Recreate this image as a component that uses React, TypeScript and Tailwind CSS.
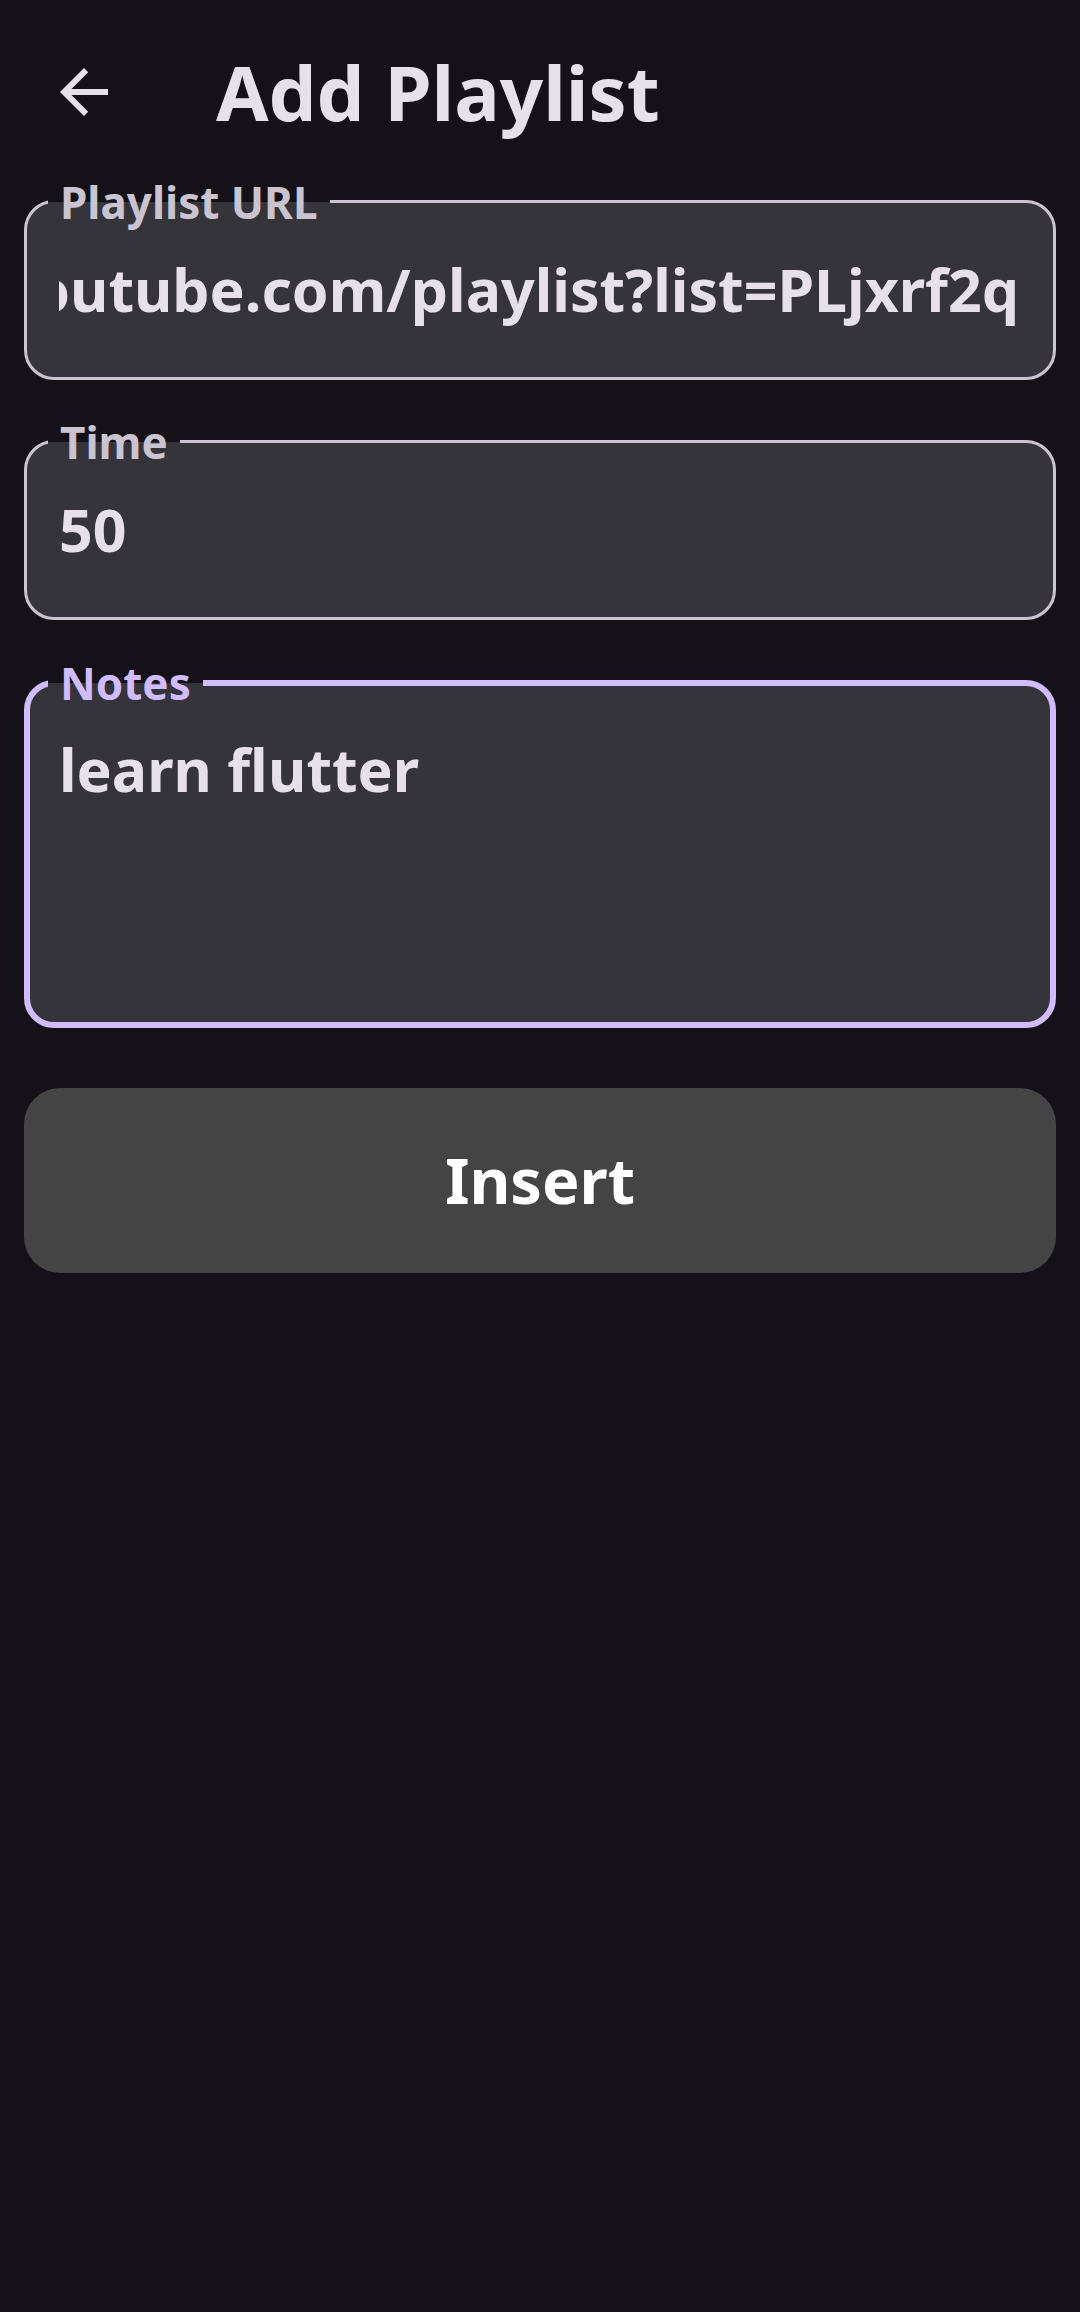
import clsx from "clsx";

interface FieldProps {
  label: string;
  value: string;
  focused?: boolean;
  alignEnd?: boolean;
}

function BackArrow() {
  return (
    <svg viewBox="0 0 24 24" className="h-[72px] w-[72px] fill-[#E6E0E9]" aria-hidden>
      <path d="M20 11H7.83l5.59-5.59L12 4l-8 8 8 8 1.41-1.41L7.83 13H20v-2z" />
    </svg>
  );
}

function Field({ label, value, focused = false, alignEnd = false }: FieldProps) {
  return (
    <div
      className={clsx(
        "relative rounded-[30px] bg-[#36343B]",
        focused
          ? "h-[348px] border-[6px] border-[#D0BCFF] pt-[43px] pl-[29px] pr-[31px]"
          : "h-[180px] border-[3px] border-[#CAC4D0] pt-[46px] pl-[32px] pr-[34px]",
      )}
    >
      <span
        className={clsx(
          "absolute bg-[linear-gradient(to_bottom,#141218_50%,#36343B_50%)] px-3 text-[44px] leading-[44px] font-bold whitespace-nowrap",
          focused ? "top-[-25px] left-[18px] text-[#D0BCFF]" : "top-[-23.5px] left-[21px] text-[#CAC4D0]",
        )}
      >
        {label}
      </span>
      <div
        className={clsx(
          "flex overflow-hidden text-[59px] leading-[80px] font-bold whitespace-nowrap text-[#E6E0E9]",
          alignEnd && "justify-end",
        )}
      >
        <span className="shrink-0">{value}</span>
      </div>
    </div>
  );
}

export default function App() {
  return (
    <div className="min-h-screen bg-[#141218] font-['Noto_Sans',sans-serif]">
      <header className="flex h-[184px] items-center">
        <button type="button" className="flex w-[168px] justify-center">
          <BackArrow />
        </button>
        <h1 className="pl-[48px] text-[76px] leading-[78px] font-bold text-[#E6E0E9]">Add Playlist</h1>
      </header>

      <main className="flex flex-col gap-[60px] px-6 pt-4">
        <Field label="Playlist URL" value="https://www.youtube.com/playlist?list=PLjxrf2q" alignEnd />
        <Field label="Time" value="50" />
        <Field label="Notes" value="learn flutter" focused />
        <button
          type="button"
          className="h-[185px] rounded-[36px] bg-[#444444] text-[63px] font-bold text-white"
        >
          Insert
        </button>
      </main>
    </div>
  );
}
